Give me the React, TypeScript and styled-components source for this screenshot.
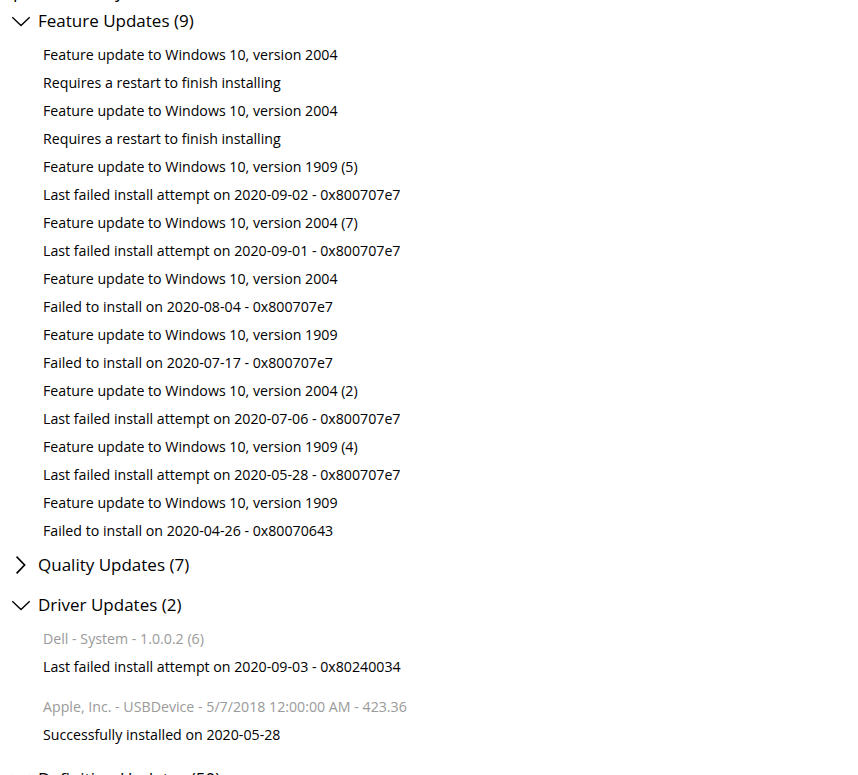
import React from 'react';
import styled, { createGlobalStyle } from 'styled-components';

const GlobalStyle = createGlobalStyle`
  html, body {
    margin: 0;
    padding: 0;
    background: #ffffff;
    overflow: hidden;
  }
  body {
    font-family: "Open Sans", "Noto Sans", "Liberation Sans", sans-serif;
    color: #000000;
  }
`;

const Page = styled.div`
  display: flex;
  flex-direction: column;
  margin-top: -20px;
  width: 858px;
  height: 795px;
  overflow: hidden;
`;

const Title = styled.h2`
  margin: 0 0 -1px 0;
  font-size: 18px;
  font-weight: 400;
  line-height: 22px;
  height: 22px;
  white-space: nowrap;
`;

const Group = styled.section`
  display: flex;
  flex-direction: column;
`;

const Header = styled.div`
  display: flex;
  align-items: center;
  height: 40px;
  padding-left: 11px;
  gap: 7px;
  font-size: 17px;
  line-height: 40px;
  white-space: nowrap;
`;

const Chevron = styled.svg`
  width: 20px;
  height: 20px;
  flex: none;
`;

const List = styled.div<{ $spaced?: boolean }>`
  display: flex;
  flex-direction: column;
  gap: ${p => (p.$spaced ? '12px' : '0')};
  padding-bottom: ${p => (p.$spaced ? '10px' : '0')};
`;

const Entry = styled.div`
  display: flex;
  flex-direction: column;
`;

const Line = styled.div<{ $muted?: boolean }>`
  height: 28px;
  line-height: 28px;
  padding-left: 43px;
  font-size: 14.2px;
  color: ${p => (p.$muted ? '#9a9a9a' : '#000000')};
  white-space: nowrap;
`;

type Item = { name: string; status: string };

type UpdateGroup = {
  title: string;
  open: boolean;
  mutedName?: boolean;
  items: Item[];
};

const groups: UpdateGroup[] = [
  {
    title: 'Feature Updates (9)',
    open: true,
    items: [
      { name: 'Feature update to Windows 10, version 2004', status: 'Requires a restart to finish installing' },
      { name: 'Feature update to Windows 10, version 2004', status: 'Requires a restart to finish installing' },
      { name: 'Feature update to Windows 10, version 1909 (5)', status: 'Last failed install attempt on 2020-09-02 - 0x800707e7' },
      { name: 'Feature update to Windows 10, version 2004 (7)', status: 'Last failed install attempt on 2020-09-01 - 0x800707e7' },
      { name: 'Feature update to Windows 10, version 2004', status: 'Failed to install on 2020-08-04 - 0x800707e7' },
      { name: 'Feature update to Windows 10, version 1909', status: 'Failed to install on 2020-07-17 - 0x800707e7' },
      { name: 'Feature update to Windows 10, version 2004 (2)', status: 'Last failed install attempt on 2020-07-06 - 0x800707e7' },
      { name: 'Feature update to Windows 10, version 1909 (4)', status: 'Last failed install attempt on 2020-05-28 - 0x800707e7' },
      { name: 'Feature update to Windows 10, version 1909', status: 'Failed to install on 2020-04-26 - 0x80070643' },
    ],
  },
  { title: 'Quality Updates (7)', open: false, items: [] },
  {
    title: 'Driver Updates (2)',
    open: true,
    mutedName: true,
    items: [
      { name: 'Dell - System - 1.0.0.2 (6)', status: 'Last failed install attempt on 2020-09-03 - 0x80240034' },
      { name: 'Apple, Inc. - USBDevice - 5/7/2018 12:00:00 AM - 423.36', status: 'Successfully installed on 2020-05-28' },
    ],
  },
  { title: 'Definition Updates (50)', open: true, items: [] },
];

const ChevronIcon: React.FC<{ open: boolean }> = ({ open }) => (
  <Chevron viewBox="0 0 20 20" fill="none" stroke="#000" strokeLinecap="square">
    {open ? (
      <path d="M1.8 6.8 L10 14.6 L18.2 6.8" strokeWidth="1.4" />
    ) : (
      <path d="M6.2 2.3 L13.6 10 L6.2 17.7" strokeWidth="1.7" />
    )}
  </Chevron>
);

const App: React.FC = () => {
  return (
    <>
      <GlobalStyle />
      <Page>
        <Title>Update history</Title>
        {groups.map(group => (
          <Group key={group.title}>
            <Header>
              <ChevronIcon open={group.open} />
              <span>{group.title}</span>
            </Header>
            {group.open && group.items.length > 0 && (
              <List $spaced={group.mutedName}>
                {group.items.map((item, i) => (
                  <Entry key={i}>
                    <Line $muted={group.mutedName}>{item.name}</Line>
                    <Line>{item.status}</Line>
                  </Entry>
                ))}
              </List>
            )}
          </Group>
        ))}
      </Page>
    </>
  );
};

export default App;
